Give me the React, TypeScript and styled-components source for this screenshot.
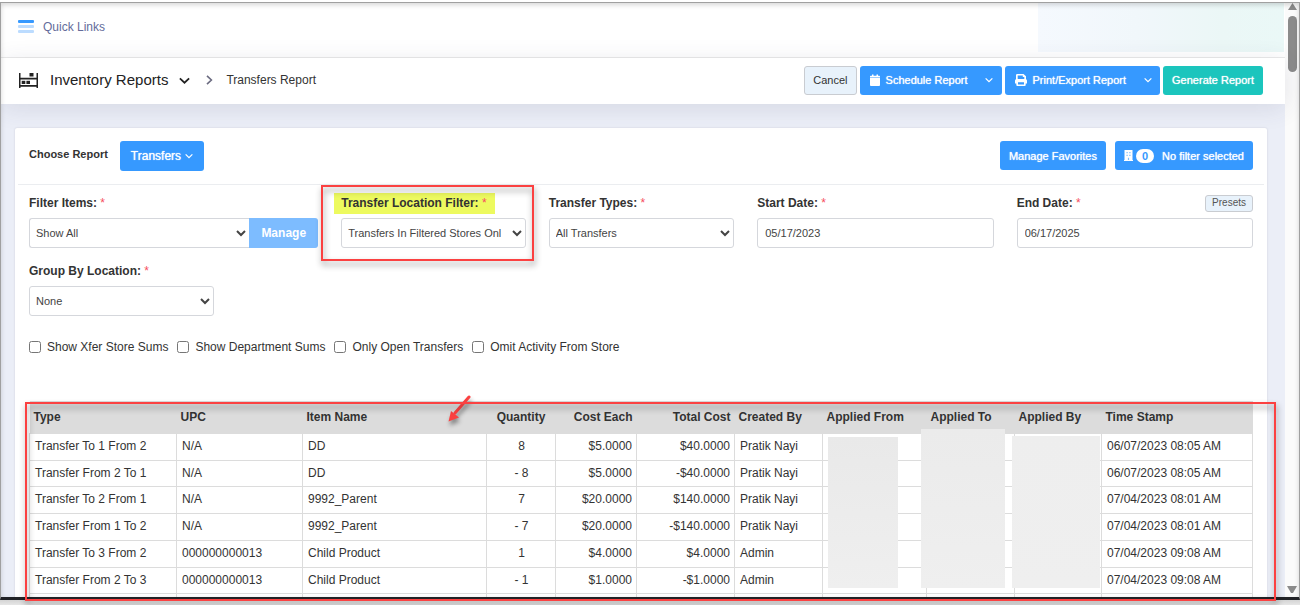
import React from "react";
import styled, { createGlobalStyle, css } from "styled-components";

const GlobalStyle = createGlobalStyle`
  *, *::before, *::after { box-sizing: border-box; }
  body {
    margin: 0;
    background: #e6e6e6;
    color: #333;
    font: 12px/18px "Liberation Sans", Arial, sans-serif;
  }
  button, input, select { font-family: inherit; margin: 0; }
`;

const Screen = styled.div`
  position: relative;
  height: 100vh;
  padding: 2px 0 5px;
  background: linear-gradient(#fff 0, #fff 98%, #d0d0d0 99%, #e6e6e6 100%);
`;

const Frame = styled.div`
  position: relative;
  display: flex;
  height: 100%;
  overflow: hidden;
  background: #fff;
  border: 1px solid #a0a0a0;
  border-bottom: 3px solid #222327;
`;

const FrameShade = styled.div`
  position: absolute;
  inset: 0;
  pointer-events: none;
  box-shadow: inset 0 2px 5px rgba(0, 0, 0, 0.16);
`;

const Page = styled.div`
  flex: 1;
  min-width: 0;
  background: #ebeef7;
`;

const TopBar = styled.header`
  display: flex;
  justify-content: space-between;
  height: 55px;
  padding: 0 1px 0 17px;
  background: #fff;
  border-bottom: 1px solid #ebebeb;
`;

const QuickLinks = styled.a`
  display: flex;
  align-items: center;
  gap: 9px;
  height: 48px;
  color: #646c9a;
  text-decoration: none;
`;

const AccountPanel = styled.div`
  width: 246px;
  height: 49px;
  background: linear-gradient(90deg, #f5f9fe, #f1f7fb 40%, #ebf7f6 75%, #eaf8f7);
`;

const SubHeader = styled.div`
  position: relative;
  display: flex;
  align-items: center;
  justify-content: space-between;
  height: 46px;
  padding: 0 22px 2px 18px;
  background: #fff;
  box-shadow: 0 4px 24px rgba(60, 60, 90, 0.12);
`;

const Crumbs = styled.nav`
  display: flex;
  align-items: center;
  color: #333;
`;

const CrumbTitle = styled.button`
  display: flex;
  align-items: center;
  gap: 11px;
  padding: 0;
  border: 0;
  background: none;
  color: #222;
  font-size: 15px;
  line-height: 18px;
`;

const CrumbArrow = styled.span`
  display: flex;
  margin: 0 12px 0 14px;
`;

const Actions = styled.div`
  display: flex;
  gap: 3px;
`;

const ButtonLabel = styled.span`
  text-shadow: 0 0 1px currentColor;
`;

const Button = styled.button<{ $tone?: "blue" | "teal" | "light" }>`
  display: flex;
  align-items: center;
  justify-content: center;
  height: 29px;
  padding: 0 9px;
  border: 0;
  border-radius: 3px;
  font-size: 11px;
  line-height: 16px;
  white-space: nowrap;
  color: #fff;
  background: #3699ff;
  ${(p) => p.$tone === "teal" && css`background: #1bc5bd;`}
  ${(p) =>
    p.$tone === "light" &&
    css`
      color: #333;
      background: #e8f2fb;
      border: 1px solid #c9ccd1;
      padding: 0 8px;
    `}
`;

const SplitButton = styled.div`
  display: flex;

  ${Button}:first-child {
    gap: 6px;
    padding: 0 9px 0 10px;
    border-radius: 3px 0 0 3px;
  }
  ${Button}:last-child {
    width: 25px;
    padding: 0;
    border-radius: 0 3px 3px 0;
  }
`;

const Card = styled.main`
  margin: 24px 18px 0 14px;
  padding: 0 3px;
  height: 600px;
  background: #fff;
  border-radius: 2px;
  box-shadow: 0 0 2px rgba(60, 60, 90, 0.2);
`;

const ChooserRow = styled.div`
  display: flex;
  align-items: flex-start;
  gap: 12px;
  height: 57px;
  padding: 13px 11px 0;
  border-bottom: 1px solid #ebedf0;

  strong { padding-top: 4px; font-size: 11px; }
`;

const ReportPicker = styled(Button)`
  gap: 4px;
  height: 30px;
  padding: 0 11px;
  font-size: 12px;
`;

const ChooserActions = styled.div`
  display: flex;
  gap: 9px;
  margin-left: auto;
`;

const Count = styled.span`
  margin: 0 8px 0 3px;
  padding: 0 6px;
  border-radius: 7px;
  background: #fff;
  color: #3699ff;
  font-weight: bold;
  line-height: 14px;
`;

const Body = styled.div`
  padding: 9px 11px 0;
`;

const FieldGrid = styled.div`
  display: grid;
  grid-template-columns: 290fr 185fr 186fr 237fr 237fr;
  gap: 14px 23px;
`;

const Field = styled.div`
  position: relative;
`;

const FieldHead = styled.div`
  display: flex;
  align-items: center;
  justify-content: space-between;
  height: 18px;
  margin-bottom: 6px;
`;

const Label = styled.label<{ $marked?: boolean }>`
  position: relative;
  font-weight: bold;

  &::after { content: " *"; color: #f64e60; font-weight: normal; }
  ${(p) =>
    p.$marked &&
    css`
      z-index: 0;
      &::before {
        content: "";
        position: absolute;
        z-index: -1;
        inset: -1px -8px -2px -7px;
        background: #edfa5f;
      }
    `}
`;

const controlBox = css`
  width: 100%;
  height: 30px;
  border: 1px solid #d5d7dc;
  border-radius: 3px;
  background: #fff;
  color: #444;
  font-size: 11px;
`;

const Select = styled.select`
  ${controlBox}
  padding: 0 8px 0 2px;
`;

const Input = styled.input`
  ${controlBox}
  padding: 0 7px;
`;

const Joined = styled.div`
  display: flex;

  ${Select} {
    flex: 1;
    border-right: 0;
    border-radius: 3px 0 0 3px;
  }
`;

const ManageButton = styled(Button)`
  width: 69px;
  height: 30px;
  border-radius: 0 3px 3px 0;
  background: #7dbcff;
  font-size: 12px;
  font-weight: bold;
`;

const PresetButton = styled(Button)`
  height: 17px;
  padding: 0 6px;
  font-size: 10px;
  line-height: 12px;
  color: #555;
`;

const Half = styled.div`
  width: 185px;
`;

const Checks = styled.div`
  display: flex;
  gap: 9px;
  margin: 22px 0 45px;
`;

const Check = styled.label`
  display: flex;
  align-items: center;
  gap: 6px;

  input { width: 12px; height: 12px; }
`;

const TableWrap = styled.div`
  position: relative;
`;

const Table = styled.table`
  width: 100%;
  table-layout: fixed;
  border-collapse: collapse;

  thead tr { height: 32px; background: #dcdcdc; }
  tbody tr { height: 27px; }
  tbody tr:nth-child(4n + 2) { height: 26px; }
`;

const align = css<{ $align?: string }>`
  text-align: ${(p) => p.$align || "left"};
  white-space: nowrap;
`;

const Th = styled.th<{ $align?: string }>`
  ${align}
  padding: 0 4px;
`;

const Td = styled.td<{ $align?: string }>`
  ${align}
  padding: 0 4px 1px 5px;
  border: 1px solid #dcdcdc;
`;

const Mask = styled.div<{ $left: number; $width: number; $top: number; $tint: string }>`
  position: absolute;
  left: ${(p) => p.$left}%;
  width: ${(p) => p.$width}%;
  top: ${(p) => p.$top}px;
  height: ${(p) => 187 - p.$top}px;
  background: linear-gradient(${(p) => p.$tint}, #efefef);
`;

const RedFrame = styled.div`
  position: absolute;
  pointer-events: none;
  border: 2px solid #fb4141;
  filter: drop-shadow(1px 4px 3px rgba(0, 0, 0, 0.45));
`;

const FieldFrame = styled(RedFrame)`
  inset: -9px -8px -13px -20px;
`;

const TableFrame = styled(RedFrame)`
  inset: 402px 24px 4px 25px;
`;

const Pointer = styled.svg`
  position: absolute;
  left: 34%;
  top: -7px;
  filter: drop-shadow(1px 4px 2px rgba(0, 0, 0, 0.4));
`;

const Scrollbar = styled.div`
  display: flex;
  flex-direction: column;
  align-items: center;
  width: 14px;
  background: #fbfbfb;
`;

const Thumb = styled.div`
  width: 9px;
  height: 56px;
  margin-top: 6px;
  border-radius: 5px;
  background: #8b8b8b;
`;

const DownArrow = styled.svg`
  margin: auto 0 4px;
`;

const Chevron = ({ size = 8, color = "#fff", dir = "down" }: { size?: number; color?: string; dir?: string }) => (
  <svg width={size} height={size} viewBox="0 0 10 10" fill="none" stroke={color} strokeWidth="1.6">
    <path d={dir === "down" ? "M0.8 3 L5 7 L9.2 3" : "M3 0.8 L7.4 5 L3 9.2"} />
  </svg>
);

const MenuIcon = () => (
  <svg width="16" height="14" viewBox="0 0 16 14">
    <rect width="16" height="3" rx="1" fill="#3699ff" />
    <rect y="5" width="16" height="3" rx="1" fill="#bcdcff" />
    <rect y="10" width="16" height="3" rx="1" fill="#bcdcff" />
  </svg>
);

const ShelfIcon = () => (
  <svg width="20" height="15" viewBox="0 0 20 15" fill="#222">
    <path d="M0 0h1.500v4.800h16V0H19v15h-1.500v-1.200h-16V15H0zM1.500 6.400v5.600h16V6.400z" fillRule="evenodd" />
    <rect x="10.500" y="0" width="4" height="3.500" />
    <rect x="2.700" y="7.800" width="3.600" height="3.200" />
    <rect x="7.400" y="7.800" width="3.600" height="3.200" />
  </svg>
);

const CalendarIcon = () => (
  <svg width="10" height="12" viewBox="0 0 10 12" fill="#fff">
    <path d="M2 0.500h1.500v1.200h3V0.500H8v1.200h1.200q.8 0 .8.8v1.100H0V2.500q0-.8.8-.8H2zM0 4.100h10v7q0 .9-.9.9H.9q-.9 0-.9-.9z" />
  </svg>
);

const PrintIcon = () => (
  <svg width="12" height="12" viewBox="0 0 12 12" fill="#fff">
    <path
      fillRule="evenodd"
      d="M1 5.200V1.200Q1 0 2.200 0H8.500L11 2.300v2.900q1 .4 1 1.600V9.500H10.700V11q0 1-1 1H2.300q-1 0-1-1V9.500H0V6.800Q0 5.600 1 5.200zM2.700 1.600V5h6.600V3H7.800V1.600zM3 8.200v2.200h6V8.200z"
    />
  </svg>
);

const BuildingIcon = () => (
  <svg width="9" height="11" viewBox="0 0 9 11">
    <path d="M0.500 0h8v10h.5v1H0v-1h.5z" fill="#fff" />
    <path d="M2.500 2h1.200v1.300H2.500zM5.300 2h1.200v1.300H5.300zM2.500 4.700h1.200V6H2.500zM5.300 4.700h1.200V6H5.300zM3.900 7.800h1.200V10H3.900z" fill="#7dbcff" />
  </svg>
);

const columns: { name: string; width: number; align?: string }[] = [
  { name: "Type", width: 147 },
  { name: "UPC", width: 126 },
  { name: "Item Name", width: 184 },
  { name: "Quantity", width: 69, align: "center" },
  { name: "Cost Each", width: 81, align: "right" },
  { name: "Total Cost", width: 98, align: "right" },
  { name: "Created By", width: 88 },
  { name: "Applied From", width: 104 },
  { name: "Applied To", width: 88 },
  { name: "Applied By", width: 87 },
  { name: "Time Stamp", width: 151 },
];

const rows = [
  ["Transfer To 1 From 2", "N/A", "DD", "8", "$5.0000", "$40.0000", "Pratik Nayi", "", "", "", "06/07/2023 08:05 AM"],
  ["Transfer From 2 To 1", "N/A", "DD", "- 8", "$5.0000", "-$40.0000", "Pratik Nayi", "", "", "", "06/07/2023 08:05 AM"],
  ["Transfer To 2 From 1", "N/A", "9992_Parent", "7", "$20.0000", "$140.0000", "Pratik Nayi", "", "", "", "07/04/2023 08:01 AM"],
  ["Transfer From 1 To 2", "N/A", "9992_Parent", "- 7", "$20.0000", "-$140.0000", "Pratik Nayi", "", "", "", "07/04/2023 08:01 AM"],
  ["Transfer To 3 From 2", "000000000013", "Child Product", "1", "$4.0000", "$4.0000", "Admin", "", "", "", "07/04/2023 09:08 AM"],
  ["Transfer From 2 To 3", "000000000013", "Child Product", "- 1", "$1.0000", "-$1.0000", "Admin", "", "", "", "07/04/2023 09:08 AM"],
  ["", "", "", "", "", "", "", "", "", "", ""],
];

const checks = ["Show Xfer Store Sums", "Show Department Sums", "Only Open Transfers", "Omit Activity From Store"];

export default function App() {
  return (
    <Screen>
      <GlobalStyle />
      <Frame>
        <Page>
          <TopBar>
            <QuickLinks href="#quick-links">
              <MenuIcon />
              Quick Links
            </QuickLinks>
            <AccountPanel />
          </TopBar>
          <SubHeader>
            <Crumbs aria-label="Breadcrumb">
              <CrumbTitle>
                <ShelfIcon />
                Inventory Reports
                <Chevron size={11} color="#222" />
              </CrumbTitle>
              <CrumbArrow>
                <Chevron size={10} color="#6b6b80" dir="right" />
              </CrumbArrow>
              Transfers Report
            </Crumbs>
            <Actions>
              <Button $tone="light">Cancel</Button>
              <SplitButton>
                <Button>
                  <CalendarIcon />
                  <ButtonLabel>Schedule Report</ButtonLabel>
                </Button>
                <Button aria-label="Schedule options"><Chevron /></Button>
              </SplitButton>
              <SplitButton>
                <Button>
                  <PrintIcon />
                  <ButtonLabel>Print/Export Report</ButtonLabel>
                </Button>
                <Button aria-label="Export options"><Chevron /></Button>
              </SplitButton>
              <Button $tone="teal"><ButtonLabel>Generate Report</ButtonLabel></Button>
            </Actions>
          </SubHeader>

          <Card>
            <ChooserRow>
              <strong>Choose Report</strong>
              <ReportPicker>
                <ButtonLabel>Transfers</ButtonLabel>
                <Chevron />
              </ReportPicker>
              <ChooserActions>
                <Button><ButtonLabel>Manage Favorites</ButtonLabel></Button>
                <Button>
                  <BuildingIcon />
                  <Count>0</Count>
                  <ButtonLabel>No filter selected</ButtonLabel>
                </Button>
              </ChooserActions>
            </ChooserRow>

            <Body>
              <FieldGrid>
                <Field>
                  <FieldHead><Label htmlFor="items">Filter Items:</Label></FieldHead>
                  <Joined>
                    <Select id="items"><option>Show All</option></Select>
                    <ManageButton>Manage</ManageButton>
                  </Joined>
                </Field>
                <Field>
                  <FieldHead><Label htmlFor="location" $marked>Transfer Location Filter:</Label></FieldHead>
                  <Select id="location"><option>Transfers In Filtered Stores Only</option></Select>
                  <FieldFrame />
                </Field>
                <Field>
                  <FieldHead><Label htmlFor="types">Transfer Types:</Label></FieldHead>
                  <Select id="types"><option>All Transfers</option></Select>
                </Field>
                <Field>
                  <FieldHead><Label htmlFor="start">Start Date:</Label></FieldHead>
                  <Input id="start" defaultValue="05/17/2023" />
                </Field>
                <Field>
                  <FieldHead>
                    <Label htmlFor="end">End Date:</Label>
                    <PresetButton $tone="light">Presets</PresetButton>
                  </FieldHead>
                  <Input id="end" defaultValue="06/17/2025" />
                </Field>
                <Field>
                  <FieldHead><Label htmlFor="group">Group By Location:</Label></FieldHead>
                  <Half><Select id="group"><option>None</option></Select></Half>
                </Field>
              </FieldGrid>

              <Checks>
                {checks.map((c) => (
                  <Check key={c}><input type="checkbox" />{c}</Check>
                ))}
              </Checks>

              <TableWrap>
                <Table>
                  <colgroup>
                    {columns.map((c) => <col key={c.name} width={c.width} />)}
                  </colgroup>
                  <thead>
                    <tr>{columns.map((c) => <Th key={c.name} $align={c.align}>{c.name}</Th>)}</tr>
                  </thead>
                  <tbody>
                    {rows.map((r, i) => (
                      <tr key={i}>
                        {r.map((v, j) => <Td key={j} $align={columns[j].align}>{v}</Td>)}
                      </tr>
                    ))}
                  </tbody>
                </Table>
                <Mask $left={65.3} $width={5.7} $top={36} $tint="#e9e9e9" />
                <Mask $left={72.9} $width={6.8} $top={28} $tint="#ebebeb" />
                <Mask $left={80.3} $width={7.2} $top={35} $tint="#eeeeee" />
                <Pointer width="26" height="30" viewBox="0 0 26 30">
                  <path d="M24 3 L10 19" stroke="#fb4141" strokeWidth="3" strokeLinecap="round" />
                  <path d="M3.500 27.500 L6 17 L14 23.500 Z" fill="#fb4141" />
                </Pointer>
              </TableWrap>
            </Body>
          </Card>
        </Page>
        <Scrollbar>
          <svg width="9" height="7" viewBox="0 0 9 7"><path d="M4.500 0 L9 7 H0z" fill="#8b8b8b" /></svg>
          <Thumb />
          <DownArrow width="10" height="7" viewBox="0 0 10 7"><path d="M0 0h10L6 7H4z" fill="#8b8b8b" /></DownArrow>
        </Scrollbar>
        <FrameShade />
      </Frame>
      <TableFrame />
    </Screen>
  );
}
